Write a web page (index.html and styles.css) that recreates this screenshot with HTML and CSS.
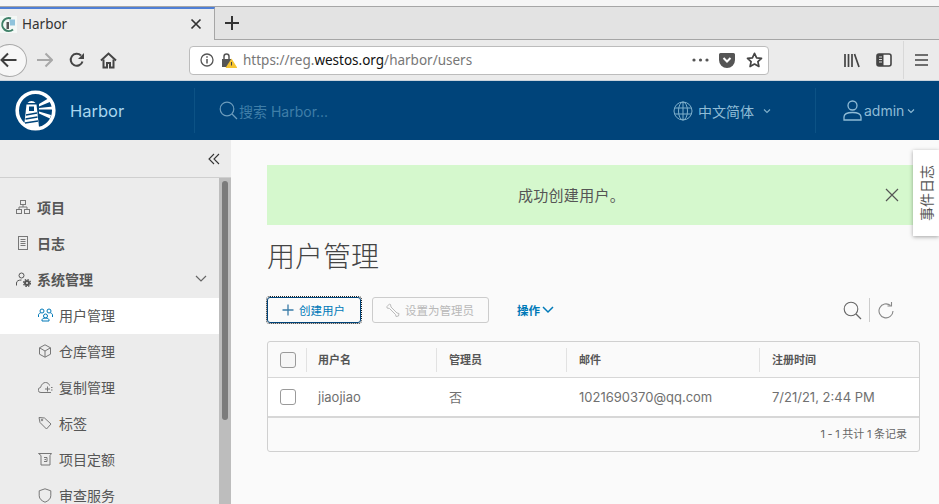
FILE: index.html
```html
<!DOCTYPE html>
<html lang="en">
<head>
    <meta charset="UTF-8">
    <meta name="viewport" content="width=device-width, initial-scale=1.0">
    <title>Harbor</title>
    <link rel="stylesheet" href="styles.css">
</head>
<body>
    <!-- browser chrome -->
    <div class="topstrip"></div>
    <div class="tabbar">
        <div class="tab">
            <svg class="favicon" width="17" height="17" viewBox="0 0 17 17"><rect width="17" height="17" fill="#f4f8f6"/><path d="M11 2.500A6.500 6.500 0 1 0 13 13.500" fill="none" stroke="#3f8068" stroke-width="2"/><rect x="6.500" y="6" width="2.500" height="7" fill="#555"/><path d="M9.500 3.500h5.500v6H10z" fill="#8fc3dc"/></svg>
            <span class="tab-title">Harbor</span>
            <svg class="tab-close" width="12" height="12" viewBox="0 0 12 12"><path d="M1.500 1.500l9 9M10.500 1.500l-9 9" stroke="#333" stroke-width="1.700"/></svg>
        </div>
        <svg class="newtab" width="16" height="16" viewBox="0 0 16 16"><path d="M8 1v14M1 8h14" stroke="#333" stroke-width="2"/></svg>
    </div>
    <div class="toolbar">
        <div class="backbtn">
            <svg width="18" height="16" viewBox="0 0 18 16"><path d="M8 1.500L1.500 8 8 14.500M2 8h14.500" fill="none" stroke="#3f3f3f" stroke-width="2"/></svg>
        </div>
        <svg class="tool-forward" width="17" height="16" viewBox="0 0 17 16"><path d="M9.500 1.500L16 8l-6.500 6.500M15 8H1" fill="none" stroke="#a8a8a8" stroke-width="2"/></svg>
        <svg class="tool-reload" width="16" height="16" viewBox="0 0 16 16"><path d="M13.500 9.500A6 6 0 1 1 12 3.500" fill="none" stroke="#444" stroke-width="2"/><path d="M15 1v6H9z" fill="#444"/></svg>
        <svg class="tool-home" width="17" height="17" viewBox="0 0 17 17"><path d="M1 8.500L8.500 1.500 16 8.500" fill="none" stroke="#444" stroke-width="2"/><path d="M3.500 7.500V15.500H7V11h3v4.500h3.500V7.500" fill="none" stroke="#444" stroke-width="2"/></svg>
        <div class="urlbar">
            <svg class="url-info" width="14" height="14" viewBox="0 0 14 14"><circle cx="7" cy="7" r="6" fill="none" stroke="#555" stroke-width="1.300"/><path d="M7 6v4.500M7 3.300v1.500" stroke="#555" stroke-width="1.500"/></svg>
            <svg class="url-lock" width="16" height="16" viewBox="0 0 16 16"><path d="M1 7h9v8H1z" fill="#555"/><path d="M3 7V4.500a2.500 2.500 0 0 1 5 0V7" fill="none" stroke="#555" stroke-width="1.500"/><path d="M10.500 6.500L16.500 16H4.500z" fill="#f5c431"/><path d="M10.500 10v3.500" stroke="#444" stroke-width="1"/></svg>
            <span class="url-text">https://reg.<b>westos.org</b>/harbor/users</span>
            <svg class="url-dots" width="17" height="4" viewBox="0 0 17 4"><circle cx="2" cy="2" r="1.600" fill="#555"/><circle cx="8.500" cy="2" r="1.600" fill="#555"/><circle cx="15" cy="2" r="1.600" fill="#555"/></svg>
            <svg class="url-pocket" width="16" height="15" viewBox="0 0 16 15"><path d="M1.500 0h13A1.500 1.500 0 0 1 16 1.500V7A8 8 0 0 1 0 7V1.500A1.500 1.500 0 0 1 1.500 0z" fill="#555"/><path d="M4.500 5L8 8.500 11.500 5" fill="none" stroke="#fff" stroke-width="2"/></svg>
            <svg class="url-star" width="17" height="16" viewBox="0 0 17 16"><path d="M8.500 1.300l2.100 4.500 4.900.6-3.600 3.300 1 4.800-4.400-2.400-4.400 2.400 1-4.800L1.500 6.400l4.900-.6z" fill="none" stroke="#444" stroke-width="1.700" stroke-linejoin="round"/></svg>
        </div>
        <svg class="tool-library" width="16" height="15" viewBox="0 0 16 15"><path d="M1 1v13M4.500 1v13M8 1v13M10.500 1l4.500 13" stroke="#444" stroke-width="1.700"/></svg>
        <svg class="tool-sidebar" width="16" height="14" viewBox="0 0 16 14"><rect x="1" y="1" width="14" height="12" rx="2" fill="#f4f4f4" stroke="#444" stroke-width="1.600"/><rect x="1" y="1" width="6.500" height="12" fill="#444"/><path d="M3 4h3M3 6.500h3M3 9h3" stroke="#ddd" stroke-width="1"/></svg>
        <div class="tool-sep"></div>
        <svg class="tool-menu" width="13" height="12" viewBox="0 0 13 12"><path d="M0 1h13M0 6h13M0 11h13" stroke="#444" stroke-width="1.700"/></svg>
    </div>

    <!-- app header -->
    <header class="navbar">
        <div class="brand">
            <svg class="logo" width="41" height="41" viewBox="0 0 41 41"><circle cx="20.500" cy="20.500" r="18.300" fill="none" stroke="#fff" stroke-width="3.600"/><path d="M12.500 13a5 5 0 0 1 8 0z" fill="#fff"/><path d="M11.500 14.500h10L24 37H9z" fill="#fff"/><path d="M14 16.500h5v4.500h-5z" fill="#00447a"/><path d="M11 25l11-2M10.500 29l12-2M10 33l13-2" stroke="#00447a" stroke-width="1.300"/><path d="M24 14l10-6 2 3.500-12 5zM24 18l14-1.500v3L24 19.500zM24 21.500l12 3.500-1 3.500-11-5z" fill="#fff"/></svg>
            <span class="brand-name">Harbor</span>
        </div>
        <div class="search">
            <svg width="19" height="19" viewBox="0 0 19 19"><circle cx="8" cy="8" r="6.800" fill="none" stroke="#6c9cbc" stroke-width="1.200"/><path d="M13 13l5 5" stroke="#6c9cbc" stroke-width="1.200"/></svg>
            <span class="search-text">搜索 Harbor...</span>
        </div>
        <div class="lang">
            <svg width="20" height="20" viewBox="0 0 20 20" fill="none" stroke="#7fb0cc" stroke-width="1"><circle cx="10" cy="10" r="9"/><ellipse cx="10" cy="10" rx="4.500" ry="9"/><path d="M10 1v18M1.500 7h17M1.500 13h17"/></svg>
            <span class="lang-text">中文简体</span>
            <svg class="caret" width="8" height="6" viewBox="0 0 8 6"><path d="M1 1.500l3 3 3-3" fill="none" stroke="#7fb0cc" stroke-width="1.100"/></svg>
        </div>
        <div class="user">
            <svg width="19" height="21" viewBox="0 0 19 21" fill="none" stroke="#8fbcd6" stroke-width="1.300"><circle cx="9.500" cy="5.500" r="4.500"/><path d="M1 20v-3c0-3 3-4.500 8.500-4.500S18 14 18 17v3z"/></svg>
            <span class="user-name">admin</span>
            <svg class="caret" width="8" height="6" viewBox="0 0 8 6"><path d="M1 1.500l3 3 3-3" fill="none" stroke="#8fbcd6" stroke-width="1.100"/></svg>
        </div>
    </header>

    <div class="layout">
        <aside class="sidebar">
            <div class="collapse">
                <svg width="12" height="12" viewBox="0 0 12 12"><path d="M6 1L1 6l5 5M11 1L6 6l5 5" fill="none" stroke="#333" stroke-width="1.100"/></svg>
            </div>
            <div class="side-body">
                <nav class="menu">
                    <div class="item top">
                        <svg width="14" height="14" viewBox="0 0 14 14" fill="none" stroke="#777" stroke-width="1"><rect x="4.500" y=".5" width="5" height="4"/><rect x=".5" y="9.500" width="5" height="4"/><rect x="8.500" y="9.500" width="5" height="4"/><path d="M3 9.500V7h8v2.500M7 4.500V7"/></svg>
                        <span>项目</span>
                    </div>
                    <div class="item top">
                        <svg width="14" height="14" viewBox="0 0 14 14" fill="none" stroke="#777" stroke-width="1"><rect x="2.500" y=".5" width="9" height="13"/><path d="M4.500 3.500h5M4.500 5.500h5M4.500 7.500h5M4.500 9.500h5"/></svg>
                        <span>日志</span>
                    </div>
                    <div class="item top">
                        <svg width="15" height="15" viewBox="0 0 15 15" fill="none" stroke="#555" stroke-width="1"><circle cx="5.500" cy="3.500" r="2.500"/><path d="M.5 13.500v-2.500c0-2 2-3 5-3"/><circle cx="11" cy="11" r="2" stroke-width="2"/><circle cx="11" cy="11" r="3.500" stroke-width="1.200" stroke-dasharray="1.500 1.250"/></svg>
                        <span>系统管理</span>
                        <svg class="item-caret" width="12" height="8" viewBox="0 0 12 8"><path d="M1 1l5 5 5-5" fill="none" stroke="#666" stroke-width="1.200"/></svg>
                    </div>
                    <div class="item sub active">
                        <svg width="15" height="14" viewBox="0 0 15 14" fill="none" stroke="#0079b8" stroke-width="1"><circle cx="7.500" cy="8" r="2"/><circle cx="4" cy="3" r="2"/><circle cx="11" cy="3" r="2"/><path d="M.5 9V7c0-1 1-2 2-2M14.500 9V7c0-1-1-2-2-2M4 13v-1c0-1 1-2 3.500-2s3.500 1 3.500 2v1z"/></svg>
                        <span>用户管理</span>
                    </div>
                    <div class="item sub">
                        <svg width="14" height="14" viewBox="0 0 14 14" fill="none" stroke="#777" stroke-width="1"><path d="M7 .8l5.500 3v6.400L7 13.200l-5.500-3V3.800zM1.500 3.800L7 7l5.500-3.200M7 7v6.200"/></svg>
                        <span>仓库管理</span>
                    </div>
                    <div class="item sub">
                        <svg width="15" height="13" viewBox="0 0 15 13" fill="none" stroke="#777" stroke-width="1"><path d="M13 11.500H3a2.500 2.500 0 0 1-.5-5C3.500 3 5.500 1.500 7.500 1.500c2 0 3.500 1 4 3M7 8h5M9.500 5.500v5M13 6.500h1.500M13 9h1.500"/></svg>
                        <span>复制管理</span>
                    </div>
                    <div class="item sub">
                        <svg width="14" height="14" viewBox="0 0 14 14" fill="none" stroke="#777" stroke-width="1"><path d="M1 1.500l5.500.5 6.500 6-4.500 5L2 6.500z"/><circle cx="4" cy="4" r=".8"/></svg>
                        <span>标签</span>
                    </div>
                    <div class="item sub">
                        <svg width="14" height="14" viewBox="0 0 14 14" fill="none" stroke="#777" stroke-width="1"><path d="M.5 1.500h13l-1.500 2v9.500H3v-9.500z"/><path d="M6 5.500h3v4H6M8 7.500H6.500"/></svg>
                        <span>项目定额</span>
                    </div>
                    <div class="item sub">
                        <svg width="14" height="15" viewBox="0 0 14 15" fill="none" stroke="#777" stroke-width="1"><path d="M7 .8l5.800 2v5C12.800 11 10 13 7 14.200 4 13 1.200 11 1.200 7.800v-5z"/></svg>
                        <span>审查服务</span>
                    </div>
                </nav>
                <div class="scrolltrack"><div class="scrollthumb"></div></div>
            </div>
        </aside>

        <main class="content">
            <div class="alert">
                <span class="alert-text">成功创建用户。</span>
                <svg class="alert-close" width="14" height="14" viewBox="0 0 14 14"><path d="M1 1l12 12M13 1L1 13" stroke="#555" stroke-width="1.200"/></svg>
            </div>
            <h1 class="title">用户管理</h1>
            <div class="actions">
                <button class="btn btn-primary">
                    <svg width="12" height="12" viewBox="0 0 12 12"><path d="M6 .5v11M.5 6h11" stroke="#3a7ca8" stroke-width="1.300"/></svg>
                    创建用户
                </button>
                <button class="btn btn-disabled">
                    <svg width="14" height="14" viewBox="0 0 14 14"><path d="M1 3.500L3.500 1l1 .5.500 2.500 6 6 2 .5-.5 2.500-2.500.5-.5-2-6-6-2.500-.5z" fill="none" stroke="#bbb" stroke-width="1"/></svg>
                    设置为管理员
                </button>
                <div class="ops">操作<svg width="12" height="8" viewBox="0 0 12 8"><path d="M1 1l5 5 5-5" fill="none" stroke="#0079b8" stroke-width="1.500"/></svg></div>
                <div class="grid-tools">
                    <svg width="19" height="19" viewBox="0 0 19 19"><circle cx="8" cy="8" r="6.800" fill="none" stroke="#666" stroke-width="1.100"/><path d="M13 13l5 5" stroke="#666" stroke-width="1.300"/></svg>
                    <div class="tools-sep"></div>
                    <svg width="16" height="17" viewBox="0 0 16 17"><path d="M12.500 3.500A7 7 0 1 0 15 9" fill="none" stroke="#888" stroke-width="1.100"/><path d="M9.500 4h4V0" fill="none" stroke="#888" stroke-width="1.100"/></svg>
                </div>
            </div>

            <div class="datagrid">
                <div class="row head">
                    <div class="cell check"><span class="box box-head"></span></div>
                    <div class="cell name">用户名</div>
                    <div class="cell">管理员</div>
                    <div class="cell">邮件</div>
                    <div class="cell">注册时间</div>
                </div>
                <div class="row body-row">
                    <div class="cell check"><span class="box"></span></div>
                    <div class="cell name">jiaojiao</div>
                    <div class="cell cjk">否</div>
                    <div class="cell">1021690370@qq.com</div>
                    <div class="cell">7/21/21, 2:44 PM</div>
                </div>
                <div class="foot">1 - 1 共计 1 条记录</div>
            </div>
        </main>

        <div class="eventlog"><span>事件日志</span></div>
    </div>
</body>
</html>
```

FILE: styles.css
```css
html, body {
    margin: 0;
    height: 504px;
    overflow: hidden;
}
body {
    font-family: Inter, "Noto Sans CJK SC", sans-serif;
    background-color: #fafafa;
    color: #565656;
}
svg {
    display: block;
    flex: none;
}

/* browser chrome */
.topstrip {
    height: 6px;
    background-color: #f5f5f5;
    border-bottom: 1px solid #a6a6a6;
}
.tabbar {
    display: flex;
    align-items: center;
    height: 32px;
    background-color: #e3e3e3;
    font-family: "Noto Sans", "Noto Sans CJK SC", sans-serif;
}
.tab {
    display: flex;
    align-items: center;
    width: 215px;
    height: 33px;
    box-sizing: border-box;
    border-top: 2px solid #4f7fd6;
    border-right: 1px solid #a6a6a6;
    background-color: #ebebeb;
    margin-right: 9px;
    position: relative;
    z-index: 1;
}
.favicon {
    margin-right: 5px;
}
.tab-title {
    flex: 1;
    font-size: 13.500px;
    color: #333;
}
.tab-close {
    margin-right: 12px;
}
.toolbar {
    display: flex;
    align-items: center;
    height: 42px;
    box-sizing: border-box;
    border-top: 1px solid #a6a6a6;
    border-bottom: 1px solid #c9d3dc;
    background-color: #ebebeb;
    font-family: "Noto Sans", sans-serif;
}
.backbtn {
    display: flex;
    align-items: center;
    justify-content: flex-end;
    width: 35px;
    height: 33px;
    box-sizing: border-box;
    margin-left: -8px;
    padding-right: 8px;
    border: 1px solid #aaa;
    border-radius: 50%;
    background-color: #f7f7f7;
}
.tool-forward {
    margin-left: 9px;
}
.tool-reload {
    margin-left: 16px;
}
.tool-home {
    margin-left: 15px;
}
.urlbar {
    display: flex;
    align-items: center;
    width: 580px;
    height: 29px;
    box-sizing: border-box;
    margin-left: 72px;
    padding: 0 5px 0 10px;
    background-color: white;
    border: 1px solid #bcbcbc;
    border-radius: 4px;
}
.url-lock {
    margin-left: 7px;
}
.url-text {
    flex: 1;
    margin-left: 6px;
    font-size: 13.500px;
    color: #777;
}
.url-text b {
    font-weight: normal;
    color: #111;
}
.url-dots {
    margin-right: 10px;
}
.url-pocket {
    margin-right: 11px;
}
.tool-library {
    margin-left: 75px;
}
.tool-sidebar {
    margin-left: 16px;
}
.tool-sep {
    width: 1px;
    height: 38px;
    margin-left: 11px;
    background-color: #d8d8d8;
}
.tool-menu {
    margin-left: 11px;
}

/* app header */
.navbar {
    display: flex;
    align-items: center;
    height: 59px;
    background-color: #00447a;
}
.brand {
    display: flex;
    align-items: center;
    width: 195px;
    height: 45px;
    box-sizing: border-box;
    padding-left: 15px;
    border-right: 1px solid #0c5285;
}
.brand-name {
    margin-left: 14px;
    font-size: 16.500px;
    color: #a9d6ee;
}
.search {
    display: flex;
    align-items: center;
    flex: 1;
    margin-left: 24px;
}
.search-text {
    margin-left: 1px;
    font-size: 14px;
    color: #3f7ea8;
}
.lang {
    display: flex;
    align-items: center;
    width: 143px;
    height: 45px;
    box-sizing: border-box;
    border-right: 1px solid #0c5285;
}
.lang-text {
    margin-left: 5px;
    font-size: 14px;
    color: #8fbcd6;
}
.lang .caret {
    margin-left: 9px;
}
.user {
    display: flex;
    align-items: center;
    width: 123px;
    box-sizing: border-box;
    padding-left: 27px;
}
.user-name {
    margin-left: 2px;
    font-size: 14px;
    color: #8fbcd6;
}
.user .caret {
    margin-left: 3px;
}

/* layout */
.layout {
    position: relative;
    display: flex;
    height: 364px;
    overflow: hidden;
}
.sidebar {
    width: 231px;
    flex: none;
    background-color: #ececec;
}
.collapse {
    display: flex;
    align-items: center;
    justify-content: flex-end;
    height: 37px;
    padding-right: 11px;
    border-bottom: 1px solid #cfcfcf;
}
.side-body {
    display: flex;
    height: 326px;
}
.menu {
    flex: 1;
    padding-top: 12px;
}
.item {
    display: grid;
    grid-template-columns: 14px 1fr auto;
    column-gap: 7px;
    align-items: center;
    height: 36px;
    box-sizing: border-box;
    padding-bottom: 2px;
    font-size: 14px;
    color: #565656;
}
.item.top {
    padding-left: 16px;
    font-weight: bold;
}
.item.sub {
    padding-left: 38px;
}
.item.active {
    background-color: white;
}
.item-caret {
    margin-right: 12px;
}
.scrolltrack {
    width: 12px;
    flex: none;
    box-sizing: border-box;
    padding: 3px 3px 0;
    background-color: #bdbdbd;
}
.scrollthumb {
    height: 239px;
    border-radius: 3px;
    background-color: #7b7b7b;
}

/* main column */
.content {
    flex: 1;
    box-sizing: border-box;
    padding: 25px 19px 0 36px;
}
.alert {
    display: flex;
    align-items: center;
    justify-content: center;
    position: relative;
    height: 60px;
    box-sizing: border-box;
    padding-bottom: 2px;
    background-color: #d5f8cd;
    font-size: 15px;
    letter-spacing: 0.3px;
    color: #555;
}
.alert-text {
    margin-right: 44px;
}
.alert-close {
    position: absolute;
    right: 21px;
    top: 23px;
}
.title {
    margin: 14px 0 0;
    height: 36px;
    font-size: 28px;
    line-height: 36px;
    font-weight: 300;
    color: #444;
}
.actions {
    display: flex;
    align-items: center;
    margin-top: 22px;
    height: 26px;
}
.btn {
    display: flex;
    align-items: center;
    justify-content: center;
    gap: 5px;
    height: 26px;
    box-sizing: border-box;
    padding: 0;
    background-color: transparent;
    font-family: inherit;
    font-size: 11.500px;
    border-radius: 3px;
}
.btn-primary {
    width: 94px;
    color: #0079b8;
    border: 1px solid #00447a;
    outline: 1px dotted #222;
    padding-right: 1px;
}
.btn-disabled {
    width: 117px;
    margin-left: 11px;
    color: #b8b8b8;
    border: 1px solid #ccc;
    padding-right: 1px;
}
.ops {
    display: flex;
    align-items: center;
    gap: 2px;
    margin-left: 28px;
    font-size: 11.500px;
    font-weight: bold;
    color: #0079b8;
}
.grid-tools {
    display: flex;
    align-items: center;
    margin-left: auto;
    margin-right: 26px;
}
.tools-sep {
    width: 1px;
    height: 24px;
    margin: 0 8px 0 7px;
    background-color: #ccc;
}
.datagrid {
    margin-top: 18px;
    border: 1px solid #d0d0d0;
    border-radius: 3px;
}
.row {
    display: grid;
    grid-template-columns: 38px 130px 130px 193px 1fr;
}
.head {
    height: 35px;
    font-size: 11px;
    font-weight: bold;
    color: #565656;
    border-bottom: 1px solid #d7d7d7;
}
.head .cell {
    border-left: 1px solid #e2e2e2;
    margin: 6px 0;
    height: 24px;
    box-sizing: border-box;
    padding-bottom: 2px;
}
.head .check {
    border-left: none;
    padding-bottom: 0;
}
.body-row {
    height: 38px;
    font-size: 13px;
    background-color: white;
    border-bottom: 2px solid #d7d7d7;
    color: #707070;
}
.cell {
    display: flex;
    align-items: center;
    padding-left: 12px;
}
.body-row .cell {
    padding-left: 13px;
}
.cell.name,
.body-row .cell.name {
    padding-left: 11px;
}
.body-row .cell.name {
    padding-left: 12px;
}
.cell.cjk {
    padding-bottom: 2px;
}
.cell.check,
.body-row .cell.check {
    padding-left: 12px;
}
.box {
    width: 14px;
    height: 14px;
    border: 1px solid #9a9a9a;
    border-radius: 3px;
    background-color: white;
}
.box-head {
    background-color: #f6f6f6;
}
.foot {
    display: flex;
    align-items: center;
    justify-content: flex-end;
    height: 33px;
    box-sizing: border-box;
    padding: 0 12px 3px 0;
    font-size: 11px;
    word-spacing: -0.5px;
    color: #666;
}
.eventlog {
    position: absolute;
    right: 0;
    top: 10px;
    display: flex;
    align-items: center;
    justify-content: center;
    width: 26px;
    height: 86px;
    background-color: white;
    box-shadow: 0 1px 4px rgba(0, 0, 0, 0.35);
    font-size: 14px;
    color: #565656;
}
.eventlog span {
    writing-mode: vertical-rl;
    text-orientation: sideways;
    transform: rotate(180deg);
}
```
